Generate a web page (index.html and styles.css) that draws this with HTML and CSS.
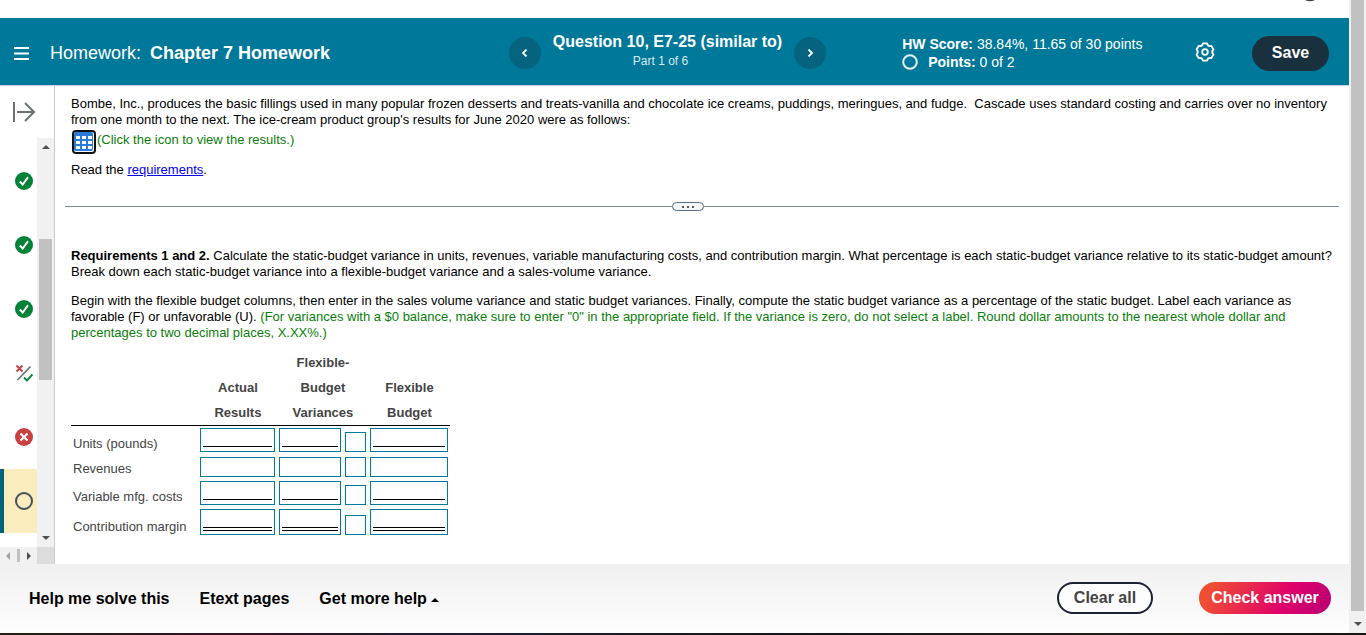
FILE: index.html
```html
<!DOCTYPE html>
<html lang="en">
<head>
<meta charset="utf-8">
<title>Chapter 7 Homework</title>
<link rel="stylesheet" href="styles.css">
</head>
<body>
<svg class="defs" width="0" height="0" aria-hidden="true">
  <symbol id="correct" viewBox="0 0 18 18"><circle cx="9" cy="9" r="9" fill="#038238"/><path d="M4.800 9.500l2.900 3 5.300-7.300" fill="none" stroke="#fff" stroke-width="2"/></symbol>
  <symbol id="wrong" viewBox="0 0 18 18"><circle cx="9" cy="9" r="9" fill="#c94141"/><path d="M5.500 5.500l7 7M12.500 5.500l-7 7" stroke="#fff" stroke-width="2.200"/></symbol>
  <symbol id="partial" viewBox="0 0 18 18"><path d="M2.500 16L15.500 2.500" stroke="#6a7070" stroke-width="1.700"/><path d="M1.500 1.500l6 6M7.500 1.500l-6 6" stroke="#c94141" stroke-width="1.800"/><path d="M9 13.500l3 3 5.500-6" fill="none" stroke="#038238" stroke-width="1.900"/></symbol>
  <symbol id="open" viewBox="0 0 18 18"><circle cx="9" cy="9" r="8" fill="none" stroke="#44505a" stroke-width="2"/></symbol>
</svg>
<div class="window">
  <div class="app">
    <div class="strip"><svg width="10" height="2" viewBox="0 0 10 2"><path d="M0 0h10Q5 2.500 0 0z" fill="#444"/></svg></div>
    <header class="header">
      <div class="brand">
        <button class="menu"><svg width="15" height="13" viewBox="0 0 15 13" stroke="#fff" stroke-width="1.800"><path d="M0 1h15M0 6.500h15M0 12h15"/></svg></button>
        <h1 class="title">Homework: <b>Chapter 7 Homework</b></h1>
      </div>
      <nav class="pager">
        <button class="round"><svg width="8" height="8" viewBox="0 0 8 8" fill="none" stroke="#fff" stroke-width="1.800"><path d="M5.500 .5L2 4l3.500 3.500"/></svg></button>
        <div class="question"><h2>Question 10, E7-25 (similar to)</h2><p>Part 1 of 6</p></div>
        <button class="round"><svg width="8" height="8" viewBox="0 0 8 8" fill="none" stroke="#fff" stroke-width="1.800"><path d="M2.500 .5L6 4 2.500 7.500"/></svg></button>
      </nav>
      <div class="status">
        <div class="score">
          <p><b>HW Score:</b> 38.84%, 11.65 of 30 points</p>
          <p class="points"><svg width="16" height="16" viewBox="0 0 16 16"><circle cx="8" cy="8" r="6.800" fill="none" stroke="#e6f2f5" stroke-width="2"/></svg><span><b>Points:</b> 0 of 2</span></p>
        </div>
        <button class="gear"><svg width="20" height="20" viewBox="0 0 20 20" fill="none" stroke="#fff" stroke-width="1.800" stroke-linejoin="round"><path d="M8 1.400H12Q13 4.800 16.450 3.970L18.450 7.430Q16 10 18.450 12.570L16.450 16.030Q13 15.200 12 18.600H8Q7 15.200 3.550 16.030L1.550 12.570Q4 10 1.550 7.430L3.550 3.970Q7 4.800 8 1.400z"/><circle cx="10" cy="10" r="2.800"/></svg></button>
        <button class="save">Save</button>
      </div>
    </header>
    <div class="workspace">
      <aside class="rail">
        <button class="expand"><svg width="23" height="20" viewBox="0 0 23 20" fill="none" stroke="#6a7070" stroke-width="2"><path d="M1 0v20M4 10h17M12 1l9 9-9 9"/></svg></button>
        <div class="list-area">
          <ul class="items">
            <li><svg><use href="#correct"/></svg></li>
            <li><svg><use href="#correct"/></svg></li>
            <li><svg><use href="#correct"/></svg></li>
            <li><svg><use href="#partial"/></svg></li>
            <li><svg><use href="#wrong"/></svg></li>
            <li class="current"><svg><use href="#open"/></svg></li>
          </ul>
          <div class="vbar"><i class="up"></i><i class="thumb"></i><i class="down"></i></div>
        </div>
        <div class="hbar"><div class="track"><i class="left"></i><i class="grip"></i><i class="right"></i></div></div>
      </aside>
      <main class="content">
        <p>Bombe, Inc., produces the basic fillings used in many popular frozen desserts and treats-vanilla and chocolate ice creams, puddings, meringues, and fudge.&nbsp; Cascade uses standard costing and carries over no inventory<br>from one month to the next. The ice-cream product group's results for June 2020 were as follows:</p>
        <div class="results">
          <button class="grid-button"><svg width="25" height="24" viewBox="0 0 25 24"><rect x="2" y="1" width="22" height="22" rx="3" fill="#fff" stroke="#111" stroke-width="2"/><rect x="3" y="2" width="19" height="19" rx="2" fill="#2b7bd9"/><path d="M5 6h4v3H5zM11 6h4v3h-4zM17 6h4v3h-4zM5 11h4v3H5zM11 11h4v3h-4zM17 11h4v3h-4zM5 16h4v3H5zM11 16h4v3h-4zM17 16h4v3h-4z" fill="#fff"/></svg></button>
          <span class="hint">(Click the icon to view the results.)</span>
        </div>
        <p>Read the <a href="#requirements">requirements</a>.</p>
        <div class="divider"><button class="handle"><i></i><i></i><i></i></button></div>
        <p class="task" id="requirements"><b>Requirements 1 and 2.</b> Calculate the static-budget variance in units, revenues, variable manufacturing costs, and contribution margin. What percentage is each static-budget variance relative to its static-budget amount?<br>Break down each static-budget variance into a flexible-budget variance and a sales-volume variance.</p>
        <p class="task">Begin with the flexible budget columns, then enter in the sales volume variance and static budget variances. Finally, compute the static budget variance as a percentage of the static budget. Label each variance as<br>favorable (F) or unfavorable (U). <span class="hint">(For variances with a $0 balance, make sure to enter "0" in the appropriate field. If the variance is zero, do not select a label. Round dollar amounts to the nearest whole dollar and<br>percentages to two decimal places, X.XX%.)</span></p>
        <table class="sheet">
          <thead><tr><th class="name"></th><th id="actual">Actual<br>Results</th><th id="variance" colspan="2"><span>Flexible-<br>Budget<br>Variances</span></th><th id="flexible">Flexible<br>Budget</th></tr></thead>
          <tbody>
            <tr class="single first"><th id="units">Units (pounds)</th><td><span class="box"><input class="w-actual" aria-labelledby="units actual"></span></td><td><span class="box"><input class="w-variance" aria-labelledby="units variance"></span></td><td><select aria-labelledby="units variance"></select></td><td><span class="box"><input class="w-flexible" aria-labelledby="units flexible"></span></td></tr>
            <tr class="plain"><th id="revenues">Revenues</th><td><span class="box"><input class="w-actual" aria-labelledby="revenues actual"></span></td><td><span class="box"><input class="w-variance" aria-labelledby="revenues variance"></span></td><td><select aria-labelledby="revenues variance"></select></td><td><span class="box"><input class="w-flexible" aria-labelledby="revenues flexible"></span></td></tr>
            <tr class="single"><th id="costs">Variable mfg. costs</th><td><span class="box"><input class="w-actual" aria-labelledby="costs actual"></span></td><td><span class="box"><input class="w-variance" aria-labelledby="costs variance"></span></td><td><select aria-labelledby="costs variance"></select></td><td><span class="box"><input class="w-flexible" aria-labelledby="costs flexible"></span></td></tr>
            <tr class="double"><th id="margin">Contribution margin</th><td><span class="box"><input class="w-actual" aria-labelledby="margin actual"></span></td><td><span class="box"><input class="w-variance" aria-labelledby="margin variance"></span></td><td><select aria-labelledby="margin variance"></select></td><td><span class="box"><input class="w-flexible" aria-labelledby="margin flexible"></span></td></tr>
          </tbody>
        </table>
      </main>
    </div>
    <footer class="footer">
      <button class="link">Help me solve this</button>
      <button class="link">Etext pages</button>
      <button class="link">Get more help <i class="caret"></i></button>
      <div class="actions">
        <button class="clear">Clear all</button>
        <button class="check">Check answer</button>
      </div>
    </footer>
  </div>
  <div class="page-bar"><i class="thumb"></i><i class="down"></i></div>
</div>
<div class="taskbar"></div>
</body>
</html>
```

FILE: styles.css
```css
* { box-sizing: border-box; }
body { margin: 0; min-height: 100vh; display: flex; flex-direction: column; background: #fff; color: #000; font-family: "Liberation Sans", Arial, sans-serif; font-size: 13px; line-height: 16px; overflow: hidden; }
p, h1, h2, ul { margin: 0; padding: 0; font-weight: normal; }
button { margin: 0; padding: 0; border: 0; background: none; color: inherit; font: inherit; cursor: pointer; }
svg { display: block; }
.defs { position: absolute; }

.window { flex: 1; display: flex; }
.app { flex: 1; min-width: 0; display: flex; flex-direction: column; }
.strip { height: 18px; display: flex; justify-content: flex-end; padding-right: 34px; }

.header { display: grid; grid-template-columns: 1fr auto 1fr; align-items: center; height: 68px; padding: 3px 20px 0 6px; background: #007899; border-bottom: 1px solid #c7d3de; color: #fff; }
.brand { display: flex; align-items: center; gap: 13px; }
.menu { padding: 8px; }
.title { font-size: 18px; line-height: 24px; white-space: nowrap; }
.title b { margin-left: 4px; }
.pager { display: flex; align-items: center; gap: 12px; }
.round { width: 32px; height: 32px; display: grid; place-items: center; border-radius: 50%; background: #05637f; }
.question { padding-bottom: 4px; text-align: center; }
.question h2 { font-size: 16px; line-height: 20px; font-weight: bold; white-space: nowrap; }
.question p { padding-right: 14px; font-size: 12px; line-height: 18px; color: #d9ebf0; }
.status { display: flex; align-items: center; padding-left: 76px; }
.score { font-size: 14px; line-height: 18px; white-space: nowrap; }
.points { display: flex; align-items: center; gap: 10px; }
.gear { margin-left: auto; padding-bottom: 2px; }
.save { width: 77px; height: 35px; margin-left: 37px; border-radius: 18px; background: #19303f; font-size: 16px; font-weight: bold; }

.workspace { flex: 1; display: flex; }
.rail { width: 55px; display: flex; flex-direction: column; border-right: 1px solid #c7cddb; }
.expand { height: 52px; padding-left: 13px; }
.list-area { flex: 1; display: flex; }
.items { flex: 1; padding: 11px 0 14px; list-style: none; }
.items li { height: 64px; display: flex; align-items: center; padding-left: 15px; }
.items svg { width: 18px; height: 18px; }
.items .current { padding-left: 11px; border-left: 4px solid #00627c; background: #faecbd; }
.vbar { width: 17px; display: flex; flex-direction: column; align-items: center; padding: 7px 0; background: #f1f1f1; }
.vbar .thumb { width: 13px; height: 141px; margin-top: 90px; background: #c1c1c1; }
.up, .down, .left, .right, .caret { border: 4px solid transparent; }
.up { border-top: 0; border-bottom-color: #505050; }
.down { margin-top: auto; border-bottom: 0; border-top-color: #505050; }
.hbar { height: 17px; padding-right: 17px; background: #dcdcdc; }
.track { height: 17px; display: flex; align-items: center; justify-content: space-between; padding: 0 6px; background: #f1f1f1; }
.left { border-left: 0; border-right-color: #a3a3a3; }
.right { border-right: 0; border-left-color: #505050; }
.grip { width: 3px; height: 13px; background: #c1c1c1; }

.content { flex: 1; min-width: 0; padding: 10px 0 0 16px; white-space: nowrap; }
.results { display: flex; align-items: flex-start; gap: 1px; margin: 2px 0 8px; }
.results .hint { padding-top: 2px; }
.hint { color: #0a7d0a; }
.content a { color: #00e; }
.divider { display: flex; align-items: center; margin: 24px 10px 37px -6px; }
.divider::before, .divider::after { content: ""; flex: 1; height: 1px; background: #7c89a3; }
.divider::before { flex-grow: 607; }
.divider::after { flex-grow: 635; }
.handle { width: 32px; height: 9px; display: flex; align-items: center; justify-content: center; gap: 3px; border: 1px solid #5a6d80; border-radius: 5px; background: #f5f6f7; }
.handle i { width: 2px; height: 2px; background: #555; }
.task { margin-bottom: 13px; }

.sheet { margin-top: -4px; border-collapse: separate; border-spacing: 0; color: #444; }
.sheet th, .sheet td { padding: 2px; vertical-align: bottom; }
.sheet thead th { padding: 0 2px; border-bottom: 1px solid #000; line-height: 25px; }
.sheet tbody th { padding-right: 12px; padding-bottom: 1px; font-weight: normal; line-height: 18px; text-align: left; }
.sheet .first td { padding-bottom: 3px; }
.sheet .first th { padding-bottom: 2px; }
.sheet .name { width: 127px; }
.box { display: block; padding: 0 2px; border: 1px solid #007a9c; }
.box input { display: block; height: 18px; padding: 0; border: 0; outline: 0; font: inherit; }
.w-actual { width: 69px; }
.w-variance { width: 56px; }
.w-flexible { width: 72px; }
.single .box { padding-bottom: 4px; }
.single .box input { border-bottom: 1px solid #000; }
.double .box { padding-bottom: 3px; }
.double .box input { height: 21px; border-bottom: 4px double #000; }
.sheet select { display: block; width: 21px; height: 20px; appearance: none; padding: 0; border: 1px solid #007a9c; border-radius: 0; background: #fff; }

.footer { display: flex; align-items: center; gap: 30px; height: 69px; padding: 0 18px 0 29px; background: linear-gradient(#f0f0f0, #fefefe); }
.link, .clear, .check { font-size: 16px; font-weight: bold; white-space: nowrap; }
.caret { display: inline-block; margin-bottom: 2px; border-top: 0; border-bottom-color: #000; }
.actions { display: flex; gap: 46px; margin-left: auto; padding-bottom: 2px; }
.clear { width: 96px; height: 32px; border: 2px solid #1c2233; border-radius: 16px; color: #444; background: #fdfdfd; }
.check { width: 132px; height: 32px; border-radius: 16px; color: #fff; background: linear-gradient(115deg, #f04e33 10%, #df006b 65%, #bd0073 95%); }

.page-bar { width: 17px; display: flex; flex-direction: column; align-items: center; padding-bottom: 7px; background: #f1f1f1; }
.page-bar .thumb { width: 13px; flex: 1; margin-bottom: 11px; background: #c1c1c1; }
.taskbar { height: 2px; background: linear-gradient(90deg, #262110, #35122a 18%, #1a2035 34%, #15171c 60%, #241d18 80%, #1a1512); }
```
